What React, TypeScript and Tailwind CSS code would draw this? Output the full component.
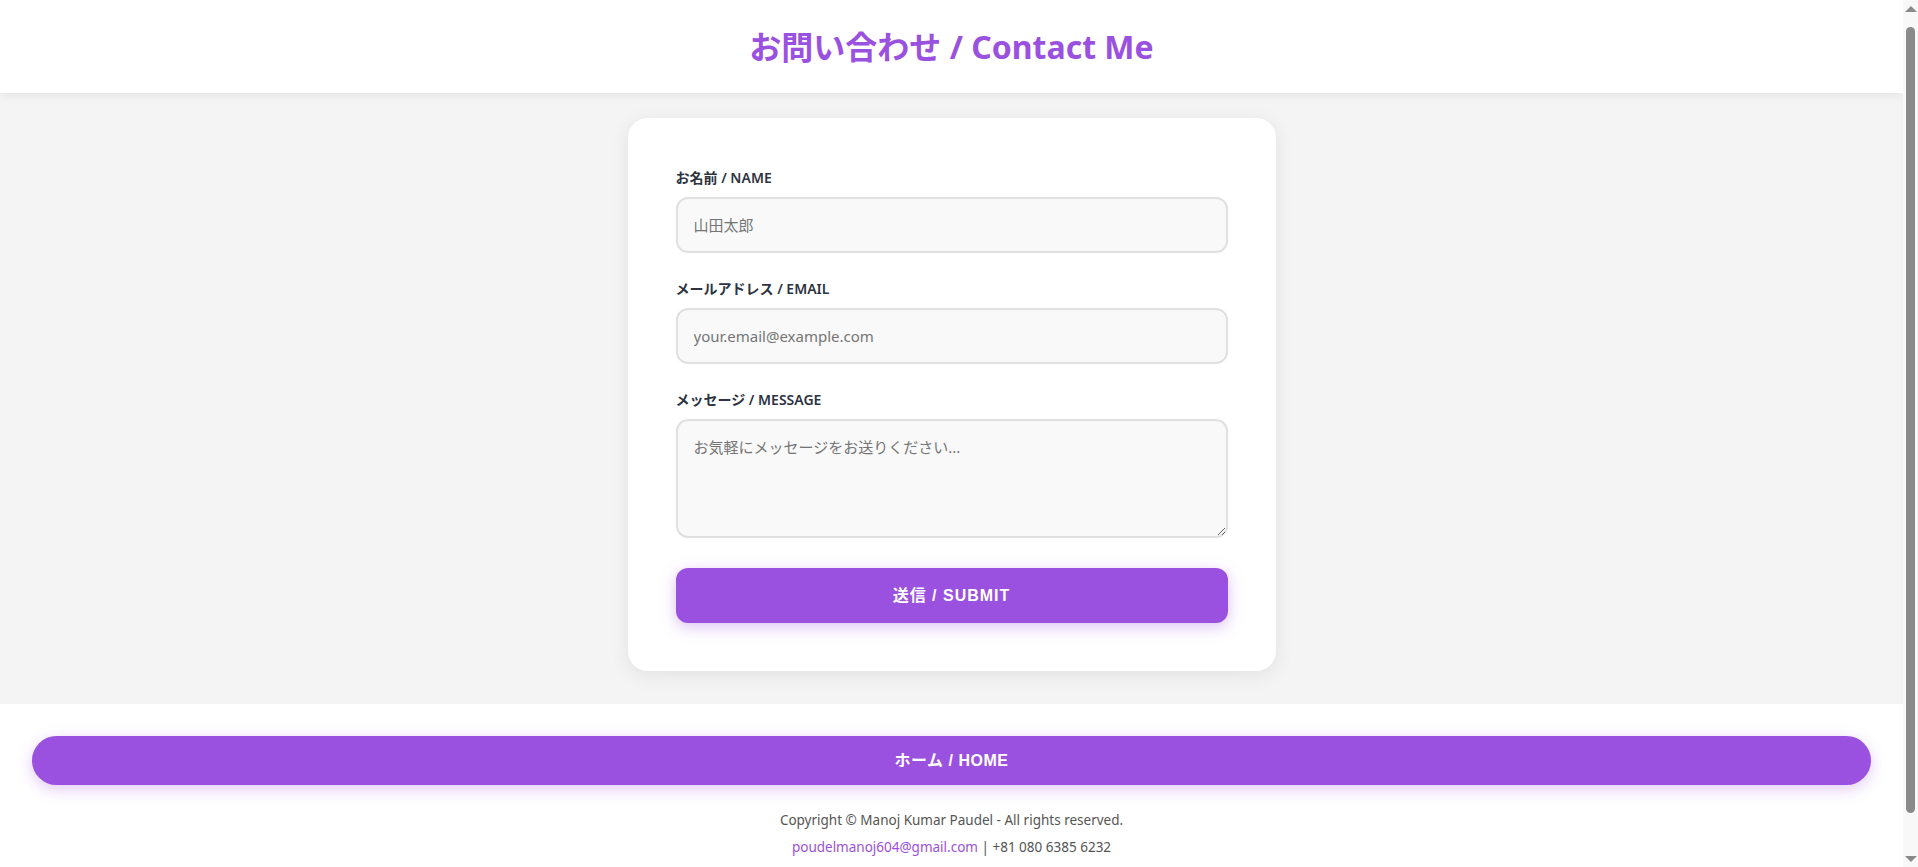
export default function App() {
  return (
    <div className="flex h-screen overflow-hidden bg-white font-['Noto_Sans','Noto_Sans_CJK_JP',sans-serif] text-[#333]">
      <div className="flex-1 min-w-0 h-full overflow-hidden">
        <header className="relative z-10 bg-white shadow-[0_2px_10px_rgba(0,0,0,0.08)] h-[93px] flex items-center justify-center">
          <h1 className="text-[32px] font-bold text-[#9b51e0] leading-[44px]">
            お問い合わせ / Contact Me
          </h1>
        </header>

        <main className="flex justify-center bg-[#f4f4f4] pt-[25px] pb-[33px]">
          <form
            className="w-[648px] bg-white rounded-[20px] p-12 shadow-[0_4px_20px_rgba(0,0,0,0.08)]"
            onSubmit={(e) => e.preventDefault()}
          >
            <div className="mb-6">
              <label className="block text-[14px] font-semibold text-[#2d3340] leading-[23px] mb-2">
                お名前 / NAME
              </label>
              <input
                type="text"
                placeholder="山田太郎"
                className="block w-full h-[56px] px-4 rounded-xl border-2 border-[#e0e0e0] bg-[#f9f9f9] text-[15px] placeholder:text-[#757575] outline-none"
              />
            </div>

            <div className="mb-6">
              <label className="block text-[14px] font-semibold text-[#2d3340] leading-[23px] mb-2">
                メールアドレス / EMAIL
              </label>
              <input
                type="email"
                placeholder="your.email@example.com"
                className="block w-full h-[56px] px-4 rounded-xl border-2 border-[#e0e0e0] bg-[#f9f9f9] text-[15px] placeholder:text-[#757575] outline-none"
              />
            </div>

            <div className="mb-[30px]">
              <label className="block text-[14px] font-semibold text-[#2d3340] leading-[23px] mb-2">
                メッセージ / MESSAGE
              </label>
              <textarea
                placeholder="お気軽にメッセージをお送りください..."
                className="block w-full h-[119px] px-4 py-[14px] rounded-xl border-2 border-[#e0e0e0] bg-[#f9f9f9] text-[15px] leading-6 placeholder:text-[#757575] outline-none"
              />
            </div>

            <button
              type="submit"
              className="block w-full h-[55px] rounded-xl bg-[#9b51e0] text-white font-['Liberation_Sans','Noto_Sans_CJK_JP',sans-serif] font-bold text-[16px] tracking-[1px] shadow-[0_4px_15px_rgba(155,81,224,0.35)]"
            >
              送信 / SUBMIT
            </button>
          </form>
        </main>

        <footer className="bg-white px-8 pt-8 pb-8 text-center">
          <button className="block w-full h-[49px] rounded-full bg-[#9b51e0] text-white font-['Liberation_Sans','Noto_Sans_CJK_JP',sans-serif] font-bold text-[16px] tracking-[0.5px] shadow-[0_4px_15px_rgba(155,81,224,0.3)]">
            ホーム / HOME
          </button>
          <p className="mt-[25px] text-[13.5px] leading-5 text-[#555]">
            Copyright © Manoj Kumar Paudel - All rights reserved.
          </p>
          <p className="mt-[7px] text-[13.5px] leading-5 text-[#555]">
            <a href="#" className="text-[#9b51e0]">
              poudelmanoj604@gmail.com
            </a>{" "}
            | +81 080 6385 6232
          </p>
        </footer>
      </div>

      {/* scrollbar */}
      <div className="w-[15px] h-full bg-[#f8f8f8] flex flex-col items-center">
        <div className="h-[17px] flex items-center justify-center">
          <div className="w-0 h-0 border-l-[6px] border-r-[6px] border-b-[6px] border-l-transparent border-r-transparent border-b-[#8a8a8a]" />
        </div>
        <div className="mt-[10px] w-[9px] h-[786px] rounded-full bg-[#8a8a8a]" />
        <div className="flex-1" />
        <div className="h-[17px] flex items-center justify-center">
          <div className="w-0 h-0 border-l-[6px] border-r-[6px] border-t-[6px] border-l-transparent border-r-transparent border-t-[#8a8a8a]" />
        </div>
      </div>
    </div>
  );
}
